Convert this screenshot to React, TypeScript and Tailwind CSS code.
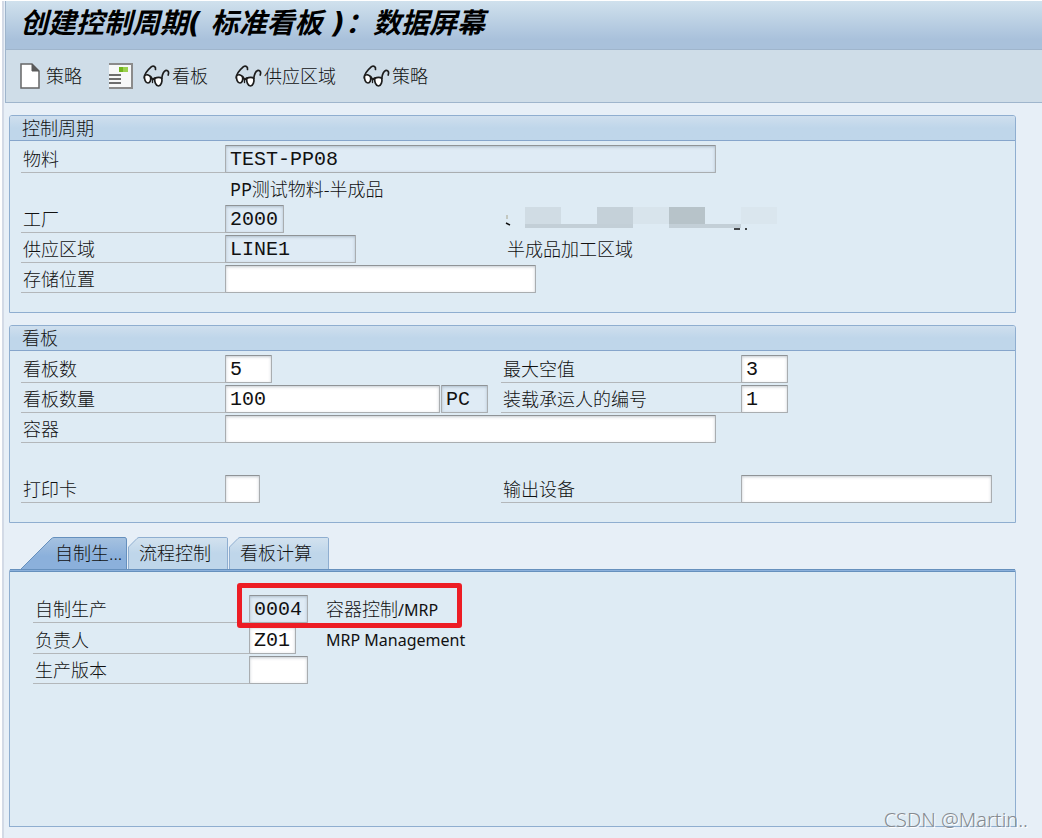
import type { ReactNode } from "react";

const Glasses = () => (
  <svg width="27" height="24" viewBox="0 0 27 24" fill="none" stroke="#1c1c1c" strokeWidth="1.7" strokeLinecap="round">
    <path d="M1.300 14C1 10 4 6.500 8.500 2.600C10.500 1.200 13 2.600 12.500 5.500" />
    <path d="M18.800 14.500C19.300 10.500 20.500 7 23 6.400C25.300 6.200 26.200 8.500 25.200 11" />
    <path d="M7.500 12.500L9.500 15.500L12.500 14" strokeWidth="2" />
    <path d="M1.500 12C3 10 6.500 10.500 7.500 13C8.300 16 7 19 5 19C2.500 19 1 15 1.500 12Z" fill="#ffffff" />
    <path d="M11.800 14.500C14 13 17.500 13 18.800 14.500C19.500 17.500 18 22 15.500 22C12.800 22 11.300 17.500 11.800 14.500Z" fill="#ffffff" />
    <path d="M9.500 15.500V18.500" strokeWidth="1.300" />
  </svg>
);

const NewPage = () => (
  <svg width="20" height="26" viewBox="0 0 20 26">
    <path d="M1 1H12L19 8V25H1Z" fill="#ffffff" stroke="#666666" strokeWidth="1.5" />
    <path d="M12 1V8H19Z" fill="#5a5a5a" stroke="#5a5a5a" />
  </svg>
);

const Overview = () => (
  <svg width="24" height="26" viewBox="0 0 24 26">
    <path d="M0 1H23V25H0Z" fill="#f7f8f8" />
    <path d="M0 1H23V25H0" fill="none" stroke="#8b8b8b" strokeWidth="2" />
    <path d="M10 4H19V9H10Z" fill="#72b51d" />
    <path d="M14 4H19V9H14Z" fill="#9bd04e" />
    <path d="M0 12H12M0 16H12M0 20H12" stroke="#6e6e6e" strokeWidth="2" />
  </svg>
);

const Panel = ({ title, children }: { title: string; children: ReactNode }) => (
  <section className="rounded-t-[3px] border border-[#8faed0] bg-[#deebf4]">
    <h2 className="h-[25px] rounded-t-[2px] border-b border-[#86a5cb] bg-linear-to-b from-[#cfdfee] to-[#bfd6ea] to-50% pl-3 text-lg leading-6 font-light">
      {title}
    </h2>
    <div className="flex flex-col gap-0.5 pt-1 pb-[19px] pl-[11px]">{children}</div>
  </section>
);

const Label = ({ id, className, children }: { id: string; className: string; children: ReactNode }) => (
  <label
    htmlFor={id}
    className={`h-7 shrink-0 border-b border-[#b3b7ba] pl-0.5 text-lg leading-7 font-light ${className}`}
  >
    {children}
  </label>
);

const Field = ({
  id,
  value = "",
  className,
  readOnly = false,
  label,
}: {
  id: string;
  value?: string;
  className: string;
  readOnly?: boolean;
  label?: string;
}) => (
  <input
    id={id}
    type="text"
    aria-label={label}
    defaultValue={value}
    readOnly={readOnly}
    className={`h-7 shrink-0 rounded-[1px] border border-[#a9adb0] border-t-[#8f9396] pl-1 font-['Liberation_Mono','Noto_Sans_CJK_SC',monospace] text-xl leading-6 shadow-[inset_0_1px_3px_rgba(60,80,100,0.3)] outline-none ${
      readOnly ? "bg-[#dfebf5]" : "bg-white"
    } ${className}`}
  />
);

const ToolButton = ({ icon, children }: { icon: ReactNode; children?: ReactNode }) => (
  <button type="button" className="flex items-center gap-0.5 text-lg leading-7 font-light">
    {icon}
    {children}
  </button>
);

const Tab = ({ label }: { label: string }) => (
  <button
    type="button"
    role="tab"
    aria-selected={false}
    className="relative h-8 w-[101px] pl-[11px] text-left text-lg leading-8 font-light"
  >
    <svg className="absolute inset-0" width="101" height="32" viewBox="0 0 101 32">
      <path d="M0.500 32V10L9 1.500Q10 0.500 11 0.500H98.500Q99.500 0.500 99.500 2V32" fill="url(#tab)" stroke="#8faed0" />
    </svg>
    <span className="relative">{label}</span>
  </button>
);

// Pixelated plant name
const MaskedName = () => (
  <svg width="276" height="24" viewBox="0 0 276 24" className="ml-[220px]" role="img" aria-label="masked">
    <path d="M21 0H57V17H21Z" fill="#d0dce4" />
    <path d="M93 0H129V17H93Z" fill="#c5d1d9" />
    <path d="M129 0H165V17H129Z" fill="#d8e4ec" />
    <path d="M165 0H201V17H165Z" fill="#b7c3c9" />
    <path d="M237 0H273V17H237Z" fill="#dae6ee" />
    <path d="M21 17H129V21H21ZM165 17H237V21H165Z" fill="#c3cfd7" />
    <path d="M3 8V12" stroke="#a8a48c" />
    <path d="M2 16L6 18M230 22H236M241 22H243" stroke="#111111" strokeWidth="1.500" />
  </svg>
);

export default function App() {
  return (
    <div className="relative flex min-h-screen bg-white pl-0.5 pt-px font-['Noto_Sans','Noto_Sans_CJK_SC',sans-serif] text-[#111]">
      <div className="flex flex-1 flex-col border-l-2 border-[#d3dae6] bg-[#e7eff7] pl-px">
        <header className="border-b border-l border-[#9fb5cc]">
          <h1 className="h-12 bg-linear-to-b from-[#d0e1ed] to-[#a9c1db] to-80% pl-3.5 font-['DejaVu_Sans','Noto_Sans_CJK_SC',sans-serif] text-[28px] leading-[46px] font-bold text-black italic">
            创建控制周期( 标准看板 )：数据屏幕
          </h1>
          <div className="flex h-[53px] items-center gap-[27px] border-t border-[#9fb5cc] bg-[#cfdde8] pl-3.5">
            <button type="button" className="flex items-center gap-1.5 text-lg leading-7 font-light">
              <NewPage />
              策略
            </button>
            <div className="flex items-center gap-2.5">
              <button type="button" aria-label="概览">
                <Overview />
              </button>
              <ToolButton icon={<Glasses />}>看板</ToolButton>
            </div>
            <ToolButton icon={<Glasses />}>供应区域</ToolButton>
            <ToolButton icon={<Glasses />}>策略</ToolButton>
          </div>
        </header>

        <main className="flex flex-1 flex-col pt-3 pr-[26px] pb-[11px] pl-1">
          <div className="flex flex-col gap-3">
            <Panel title="控制周期">
              <div className="flex">
                <Label id="material" className="w-[204px]">物料</Label>
                <Field id="material" value="TEST-PP08" readOnly className="w-[491px]" />
              </div>
              <p className="h-7 pl-[209px] text-lg leading-7 font-light">
                <span className="font-normal">PP</span>测试物料-半成品
              </p>
              <div className="flex items-center">
                <Label id="plant" className="w-[204px]">工厂</Label>
                <Field id="plant" value="2000" readOnly className="w-[59px]" />
                <MaskedName />
              </div>
              <div className="flex">
                <div className="flex w-[486px]">
                  <Label id="area" className="w-[204px]">供应区域</Label>
                  <Field id="area" value="LINE1" readOnly className="w-[131px]" />
                </div>
                <span className="text-lg leading-7 font-light">半成品加工区域</span>
              </div>
              <div className="flex">
                <Label id="storage" className="w-[204px]">存储位置</Label>
                <Field id="storage" className="w-[311px]" />
              </div>
            </Panel>

            <Panel title="看板">
              <div className="flex">
                <div className="flex w-[480px]">
                  <Label id="count" className="w-[204px]">看板数</Label>
                  <Field id="count" value="5" className="w-[47px]" />
                </div>
                <Label id="maxEmpty" className="w-[240px]">最大空值</Label>
                <Field id="maxEmpty" value="3" className="w-[47px]" />
              </div>
              <div className="flex">
                <div className="flex w-[480px]">
                  <Label id="quantity" className="w-[204px]">看板数量</Label>
                  <Field id="quantity" value="100" className="mr-px w-[215px]" />
                  <Field id="unit" label="单位" value="PC" readOnly className="w-[47px]" />
                </div>
                <Label id="carriers" className="w-[240px]">装载承运人的编号</Label>
                <Field id="carriers" value="1" className="w-[47px]" />
              </div>
              <div className="flex pb-[30px]">
                <Label id="container" className="w-[204px]">容器</Label>
                <Field id="container" className="w-[491px]" />
              </div>
              <div className="flex">
                <div className="flex w-[480px]">
                  <Label id="printCard" className="w-[204px]">打印卡</Label>
                  <Field id="printCard" className="w-[35px]" />
                </div>
                <Label id="device" className="w-[240px]">输出设备</Label>
                <Field id="device" className="w-[251px]" />
              </div>
            </Panel>
          </div>

          <div role="tablist" className="mt-3.5 flex pl-3">
            <button
              type="button"
              role="tab"
              aria-selected
              className="relative h-8 w-[107px] pl-[34px] text-left text-lg leading-8 font-light"
            >
              <svg className="absolute inset-0" width="107" height="32" viewBox="0 0 107 32">
                <defs>
                  <linearGradient id="tab" x1="0" y1="0" x2="0" y2="1">
                    <stop offset="0" stopColor="#d3e2ef" />
                    <stop offset="0.500" stopColor="#bfd6ea" />
                  </linearGradient>
                  <linearGradient id="tabActive" x1="0" y1="0" x2="0" y2="1">
                    <stop offset="0" stopColor="#a6c2e0" />
                    <stop offset="0.600" stopColor="#8bb0db" />
                  </linearGradient>
                </defs>
                <path d="M0 32L30 2Q31.500 0.500 33 0.500H104Q105.500 0.500 105.500 3V32" fill="url(#tabActive)" stroke="#6690bd" />
              </svg>
              <span className="relative">自制生...</span>
            </button>
            <Tab label="流程控制" />
            <Tab label="看板计算" />
          </div>

          <section
            role="tabpanel"
            className="flex flex-1 flex-col gap-0.5 rounded-t-[3px] border border-t-0 border-[#8faed0] bg-[#deebf4] pb-4"
          >
            <div className="mb-[21px] h-[3px] border-y border-[#6690bd] bg-[#8bb0db]" />
            <div className="flex pl-[23px]">
              <Label id="inHouse" className="w-[216px]">自制生产</Label>
              <div className="relative flex">
                <Field id="inHouse" value="0004" readOnly className="w-[59px]" />
                <span className="pl-[18px] text-lg leading-7 font-light">
                  容器控制<span className="text-base leading-7 font-normal">/MRP</span>
                </span>
                <div className="absolute -top-3 -right-6 -bottom-1 -left-3 rounded-[3px] border-[5px] border-[#ed1c24]" />
              </div>
            </div>
            <div className="flex pl-[23px]">
              <Label id="owner" className="w-[216px]">负责人</Label>
              <Field id="owner" value="Z01" className="w-[47px]" />
              <span className="pl-[30px] text-base leading-7">MRP Management</span>
            </div>
            <div className="flex pl-[23px]">
              <Label id="version" className="w-[216px]">生产版本</Label>
              <Field id="version" className="w-[59px]" />
            </div>
          </section>
        </main>
      </div>

      <div className="absolute right-3.5 bottom-1 text-xl leading-7 font-light text-[#858a90] [text-shadow:1px_1px_0_#ffffff]">
        CSDN @Martin..
      </div>
    </div>
  );
}
